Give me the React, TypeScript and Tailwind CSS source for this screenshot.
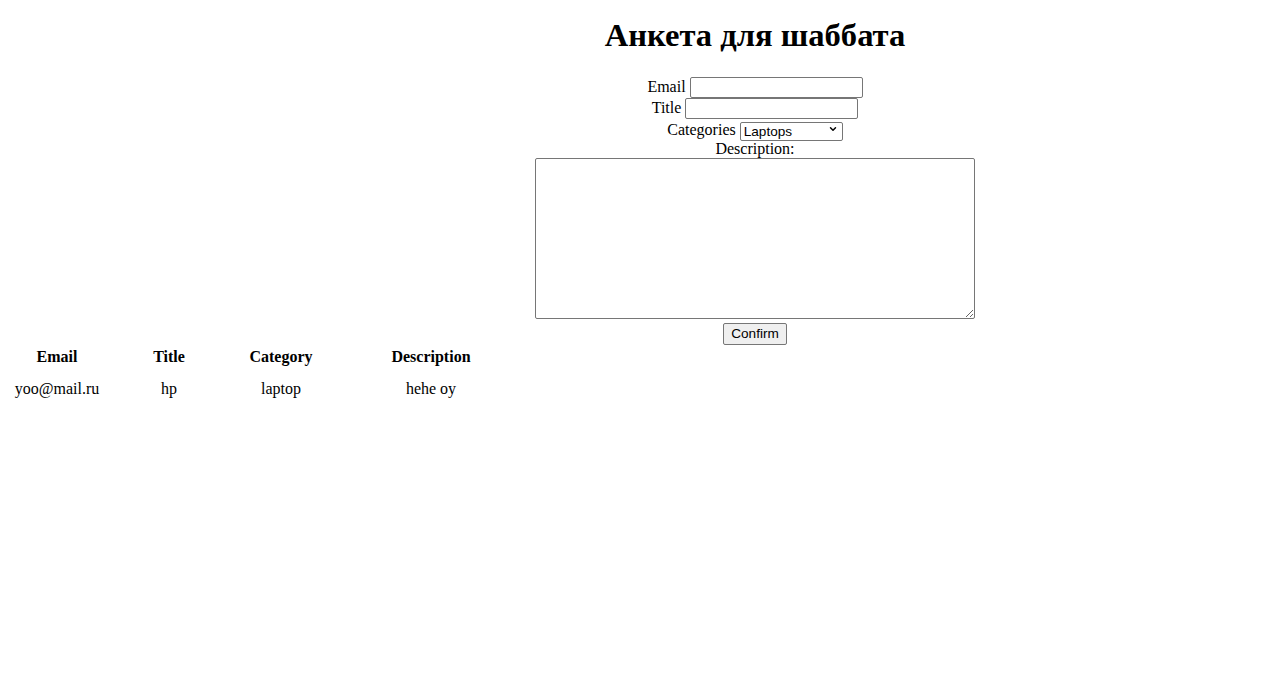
import { ChevronDown } from 'lucide-react';

const control = "border border-[#767676] rounded-[2px] bg-white";

export default function App() {
  return (
    <div className="min-h-[687px] w-full bg-white text-black font-['Liberation_Serif',serif] text-[16px]">
      {/* Form */}
      <div className="pl-[230px] text-center">
        <h1 className="pt-[17px] h-[76px] text-[32.6px] leading-[37px] font-bold">Анкета для шаббата</h1>
        <form className="flex flex-col items-center">
          <div className="flex h-[22px] items-center justify-center gap-[4px] pt-[1px]">
            <label className="relative -top-[1px]">Email</label>
            <input className={`${control} h-[21px] w-[173px]`} />
          </div>
          <div className="flex h-[21px] items-center justify-center gap-[4px]">
            <label className="relative -top-[1px]">Title</label>
            <input className={`${control} h-[21px] w-[173px]`} />
          </div>
          <div className="flex h-[21px] items-center justify-center gap-[4px] pt-[2px]">
            <label className="relative -top-[1px]">Categories</label>
            <div className="relative">
              <select className={`${control} appearance-none h-[19px] w-[103px] pl-[3px] text-left font-['Liberation_Sans',Arial,sans-serif] text-[13.6px] leading-[15px]`}>
                <option>Laptops</option>
                <option>Phones</option>
                <option>Tablets</option>
              </select>
              <ChevronDown className="pointer-events-none absolute right-[5px] top-[5px] h-[10px] w-[10px]" strokeWidth={3.5} />
            </div>
          </div>
          <div className="h-[18px] leading-[18px]">Description:</div>
          <textarea className={`${control} h-[161px] w-[440px] rounded-[2px]`} />
          <button
            type="button"
            className="mt-[4px] h-[22px] w-[64px] rounded-[2px] border border-[#767676] bg-[#efefef] font-['Liberation_Sans',Arial,sans-serif] text-[13.6px]"
          >
            Confirm
          </button>
        </form>
      </div>

      {/* Table */}
      <table className="border-collapse">
        <thead>
          <tr className="h-[22px]">
            <th className="w-[114px] font-bold">Email</th>
            <th className="w-[110px] font-bold">Title</th>
            <th className="w-[114px] font-bold">Category</th>
            <th className="w-[186px] font-bold">Description</th>
          </tr>
        </thead>
        <tbody>
          <tr className="h-[40px]">
            <td className="text-center">yoo@mail.ru</td>
            <td className="text-center">hp</td>
            <td className="text-center">laptop</td>
            <td className="text-center">hehe oy</td>
          </tr>
        </tbody>
      </table>
    </div>
  );
}
